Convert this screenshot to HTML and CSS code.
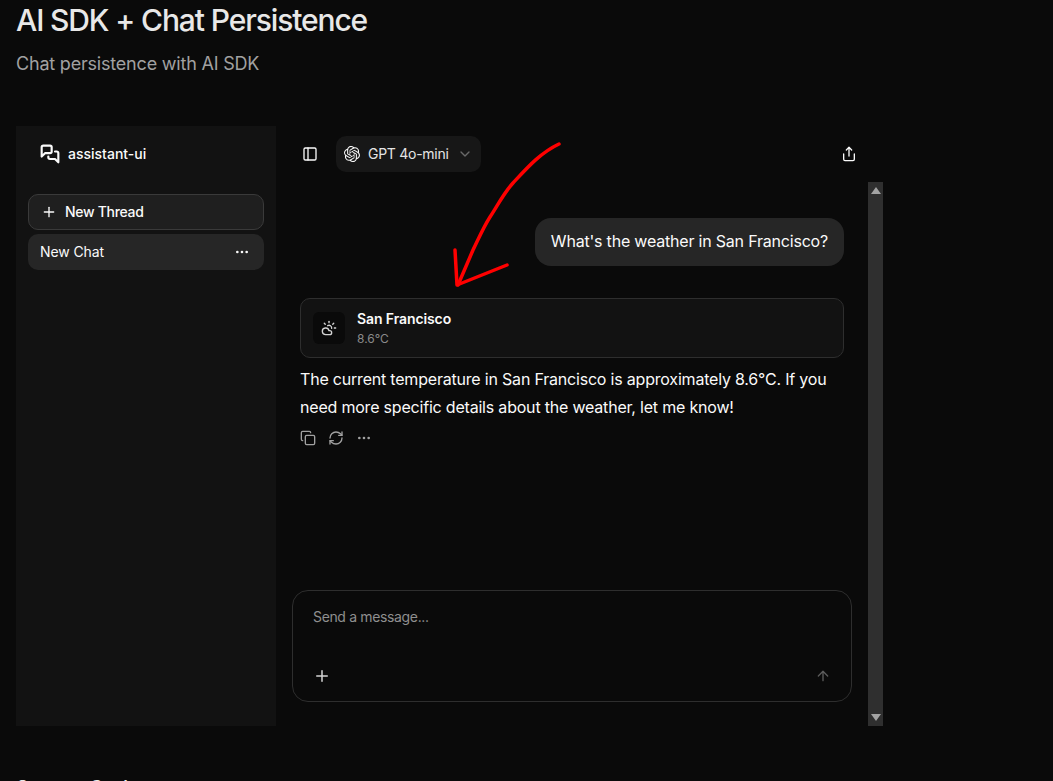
FILE: index.html
```html
<!DOCTYPE html>
<html lang="en">
<head>
<meta charset="utf-8">
<title>AI SDK + Chat Persistence</title>
<link rel="stylesheet" href="styles.css">
</head>
<body>
<div class="page">
  <header class="page-head">
    <h1>AI SDK + Chat Persistence</h1>
    <p>Chat persistence with AI SDK</p>
  </header>
  <section class="app">
    <aside class="sidebar">
      <div class="brand">
        <svg class="ic brand-ic" viewBox="0 0 24 24"><path d="M14 9a2 2 0 0 1-2 2H6l-4 4V4a2 2 0 0 1 2-2h8a2 2 0 0 1 2 2z"/><path d="M18 9h2a2 2 0 0 1 2 2v11l-4-4h-6a2 2 0 0 1-2-2v-1"/></svg>
        <span>assistant-ui</span>
      </div>
      <div class="thread-list">
        <button class="new-thread">
          <svg class="ic ic16" viewBox="0 0 24 24"><path d="M5 12h14"/><path d="M12 5v14"/></svg>
          <span>New Thread</span>
        </button>
        <div class="thread">
          <span>New Chat</span>
          <svg class="ic ic16" viewBox="0 0 24 24"><circle cx="12" cy="12" r="1"/><circle cx="19" cy="12" r="1"/><circle cx="5" cy="12" r="1"/></svg>
        </div>
      </div>
    </aside>
    <div class="main">
      <div class="topbar">
        <svg class="ic ic16 panel-ic" viewBox="0 0 24 24"><rect width="18" height="18" x="3" y="3" rx="2"/><path d="M9 3v18"/></svg>
        <div class="model">
          <svg class="logo" viewBox="0 0 24 24"><path d="M22.2819 9.8211a5.9847 5.9847 0 0 0-.5157-4.9108 6.0462 6.0462 0 0 0-6.5098-2.9A6.0651 6.0651 0 0 0 4.9807 4.1818a5.9847 5.9847 0 0 0-3.9977 2.9 6.0462 6.0462 0 0 0 .7427 7.0966 5.98 5.98 0 0 0 .511 4.9107 6.051 6.051 0 0 0 6.5146 2.9001A5.9847 5.9847 0 0 0 13.2599 24a6.0557 6.0557 0 0 0 5.7718-4.2058 5.9894 5.9894 0 0 0 3.9977-2.9001 6.0557 6.0557 0 0 0-.7475-7.0729zm-9.022 12.6081a4.4755 4.4755 0 0 1-2.8764-1.0408l.1419-.0804 4.7783-2.7582a.7948.7948 0 0 0 .3927-.6813v-6.7369l2.02 1.1686a.071.071 0 0 1 .038.052v5.5826a4.504 4.504 0 0 1-4.4945 4.4944zm-9.6607-4.1254a4.4708 4.4708 0 0 1-.5346-3.0137l.142.0852 4.783 2.7582a.7712.7712 0 0 0 .7806 0l5.8428-3.3685v2.3324a.0804.0804 0 0 1-.0332.0615L9.74 19.9502a4.4992 4.4992 0 0 1-6.1408-1.6464zM2.3408 7.8956a4.485 4.485 0 0 1 2.3655-1.9728V11.6a.7664.7664 0 0 0 .3879.6765l5.8144 3.3543-2.0201 1.1685a.0757.0757 0 0 1-.071 0l-4.8303-2.7865A4.504 4.504 0 0 1 2.3408 7.872zm16.5963 3.8558L13.1038 8.364 15.1192 7.2a.0757.0757 0 0 1 .071 0l4.8303 2.7913a4.4944 4.4944 0 0 1-.6765 8.1042v-5.6772a.79.79 0 0 0-.407-.667zm2.0107-3.0231l-.142-.0852-4.7735-2.7818a.7759.7759 0 0 0-.7854 0L9.409 9.2297V6.8974a.0662.0662 0 0 1 .0284-.0615l4.8303-2.7866a4.4992 4.4992 0 0 1 6.6802 4.66zM8.3065 12.863l-2.02-1.1638a.0804.0804 0 0 1-.038-.0567V6.0742a4.4992 4.4992 0 0 1 7.3757-3.4537l-.142.0805L8.704 5.459a.7948.7948 0 0 0-.3927.6813zm1.0976-2.3654l2.602-1.4998 2.6069 1.4998v2.9994l-2.5974 1.4997-2.6067-1.4997Z"/></svg>
          <span>GPT 4o-mini</span>
          <svg class="ic chevron" viewBox="0 0 24 24"><path d="m6 9 6 6 6-6"/></svg>
        </div>
        <svg class="ic ic16 share-ic" viewBox="0 0 24 24"><path d="M4 12v8a2 2 0 0 0 2 2h12a2 2 0 0 0 2-2v-8"/><path d="m16 6-4-4-4 4"/><path d="M12 2v13"/></svg>
      </div>
      <div class="body">
        <div class="scroll-area">
          <div class="user-row"><div class="bubble">What's the weather in San Francisco?</div></div>
          <div class="weather">
            <div class="weather-ic">
              <svg class="ic ic16" viewBox="0 0 24 24"><path d="M12 2v2"/><path d="m4.93 4.93 1.41 1.41"/><path d="M20 12h2"/><path d="m19.07 4.93-1.41 1.41"/><path d="M15.947 12.65a4 4 0 0 0-5.925-4.128"/><path d="M13 22H7a5 5 0 1 1 4.9-6H13a3 3 0 0 1 0 6Z"/></svg>
            </div>
            <div class="weather-text">
              <div class="city">San Francisco</div>
              <div class="temp">8.6°C</div>
            </div>
          </div>
          <p class="answer">The current temperature in San Francisco is approximately 8.6°C. If you need more specific details about the weather, let me know!</p>
          <div class="actions">
            <svg class="ic ic16" viewBox="0 0 24 24"><rect width="14" height="14" x="8" y="8" rx="2"/><path d="M4 16c-1.1 0-2-.9-2-2V4c0-1.1.9-2 2-2h10c1.1 0 2 .9 2 2"/></svg>
            <svg class="ic ic16" viewBox="0 0 24 24"><path d="M3 12a9 9 0 0 1 9-9 9.75 9.75 0 0 1 6.74 2.74L21 8"/><path d="M21 3v5h-5"/><path d="M21 12a9 9 0 0 1-9 9 9.75 9.75 0 0 1-6.74-2.74L3 16"/><path d="M8 16H3v5"/></svg>
            <svg class="ic ic16" viewBox="0 0 24 24"><circle cx="12" cy="12" r="1"/><circle cx="19" cy="12" r="1"/><circle cx="5" cy="12" r="1"/></svg>
          </div>
          <div class="spacer"></div>
          <div class="composer">
            <div class="placeholder">Send a message...</div>
            <div class="composer-tools">
              <svg class="ic plus" viewBox="0 0 24 24"><path d="M5 12h14"/><path d="M12 5v14"/></svg>
              <svg class="ic send" viewBox="0 0 24 24"><path d="m5 12 7-7 7 7"/><path d="M12 19V5"/></svg>
            </div>
          </div>
        </div>
        <div class="scrollbar">
          <span class="arrow-up"></span>
          <span class="arrow-down"></span>
        </div>
      </div>
    </div>
  </section>
  <h2 class="next">Source Code</h2>
  <svg class="annotation" viewBox="0 0 1053 781"><path d="M559 144C540 153 527 168 513 183C503 194 498 205 490 217C483 228 478 240 473 250L458 285"/><path d="M455 250L457 285L507 265"/></svg>
</div>
</body>
</html>
```

FILE: styles.css
```css
* { box-sizing: border-box; }
html, body {
  margin: 0;
  height: 100%;
  overflow: hidden;
  background: #0a0a0a;
}
body {
  font-family: Inter, "Noto Sans", sans-serif;
  color: #fafafa;
}
.page {
  position: relative;
  height: 781px;
  overflow: hidden;
  padding: 0 16px;
}
.page-head { height: 126px; }
.page-head h1 {
  margin: 0;
  font-size: 30px;
  line-height: 40px;
  font-weight: 500;
  letter-spacing: -1.12px;
  color: #e8e8e8;
}
.page-head p {
  margin: 10px 0 0;
  font-size: 18px;
  line-height: 28px;
  letter-spacing: -0.2px;
  color: #a1a1a1;
}
.app {
  display: flex;
  width: 867px;
  height: 600px;
}
.sidebar {
  flex: 0 0 260px;
  background: #121212;
  padding: 0 12px;
}
.brand {
  display: flex;
  align-items: center;
  gap: 8px;
  height: 56px;
  padding-left: 12px;
  font-size: 14px;
  line-height: 20px;
  font-weight: 500;
}
.brand-ic { width: 20px; height: 20px; stroke-width: 2.6; }
.thread-list {
  display: flex;
  flex-direction: column;
  gap: 4px;
  margin-top: 12px;
}
.new-thread {
  display: flex;
  align-items: center;
  gap: 8px;
  height: 36px;
  padding: 0 12px;
  background: #1f1f1f;
  border: 1px solid #3a3a3a;
  border-radius: 10px;
  color: #fafafa;
  font: 500 14px/20px Inter, sans-serif;
  letter-spacing: -0.3px;
}
.thread {
  display: flex;
  align-items: center;
  justify-content: space-between;
  height: 36px;
  padding: 0 14px 0 12px;
  background: #262626;
  border-radius: 10px;
  font-size: 14px;
  line-height: 20px;
  letter-spacing: -0.1px;
}
.main {
  flex: 1;
  min-width: 0;
  display: flex;
  flex-direction: column;
}
.topbar {
  display: flex;
  align-items: center;
  height: 56px;
  padding: 0 26px;
}
.panel-ic { margin-right: 18px; }
.model {
  display: flex;
  align-items: center;
  height: 36px;
  padding: 0 8px;
  gap: 8px;
  background: #171717;
  border-radius: 10px;
  font-size: 14px;
  line-height: 20px;
  letter-spacing: -0.27px;
  color: #e5e5e5;
}
.logo { width: 16px; height: 16px; fill: #fafafa; }
.chevron { width: 16px; height: 16px; opacity: .4; }
.share-ic { margin-left: auto; }
.body {
  flex: 1;
  min-height: 0;
  display: flex;
}
.scroll-area {
  flex: 1;
  min-width: 0;
  display: flex;
  flex-direction: column;
  padding: 36px 24px 24px;
}
.user-row { display: flex; justify-content: flex-end; }
.bubble {
  padding: 11px 16px 13px;
  background: #262626;
  border-radius: 16px;
  font-size: 16px;
  line-height: 24px;
  letter-spacing: -0.2px;
}
.weather {
  display: flex;
  align-items: center;
  gap: 12px;
  height: 60px;
  margin-top: 32px;
  padding: 0 12px;
  background: #121212;
  border: 1px solid #2e2e2e;
  border-radius: 10px;
}
.weather-ic {
  display: flex;
  align-items: center;
  justify-content: center;
  width: 32px;
  height: 32px;
  background: #0a0a0a;
  border-radius: 6px;
  color: #d4d4d4;
}
.city { font-size: 14px; line-height: 20px; font-weight: 600; letter-spacing: -0.1px; }
.temp { font-size: 12px; line-height: 16px; margin-top: 2px; color: #8a8a8a; }
.answer {
  margin: 7px 0 0;
  font-size: 16px;
  line-height: 28px;
  letter-spacing: -0.2px;
}
.actions {
  display: flex;
  gap: 12px;
  margin-top: 9px;
  color: #a1a1a1;
}
.spacer { flex: 1; }
.composer {
  display: flex;
  flex-direction: column;
  justify-content: space-between;
  height: 112px;
  margin: 0 -8px;
  padding: 16px 20px;
  background: #0a0a0a;
  border: 1px solid #2e2e2e;
  border-radius: 16px;
}
.placeholder { font-size: 14px; line-height: 20px; letter-spacing: -0.35px; color: #8f8f8f; }
.composer-tools {
  display: flex;
  align-items: center;
  justify-content: space-between;
  color: #d4d4d4;
}
.plus { width: 18px; height: 18px; }
.send { width: 16px; height: 16px; color: #5c5c5c; }
.ic {
  flex: none;
  fill: none;
  stroke: currentColor;
  stroke-linecap: round;
  stroke-linejoin: round;
}
.ic:not(.brand-ic) { stroke-width: 2; }
.ic16 { width: 16px; height: 16px; }
.scrollbar {
  flex: 0 0 15px;
  display: flex;
  flex-direction: column;
  justify-content: space-between;
  align-items: center;
  padding: 5px 0;
  background: #2f2f2f;
}
.arrow-up, .arrow-down {
  width: 0;
  height: 0;
  border-left: 5px solid transparent;
  border-right: 5px solid transparent;
}
.arrow-up { border-bottom: 7px solid #a3a3a3; }
.arrow-down { border-top: 7px solid #a3a3a3; }
.next {
  margin: 48px 0 0;
  font-size: 20px;
  line-height: 28px;
  font-weight: 500;
  color: #e8e8e8;
}
.annotation {
  position: absolute;
  left: 0;
  top: 0;
  width: 1053px;
  height: 781px;
  pointer-events: none;
  fill: none;
  stroke: #ff0000;
  stroke-width: 3.5;
  stroke-linecap: round;
  stroke-linejoin: round;
}
```
